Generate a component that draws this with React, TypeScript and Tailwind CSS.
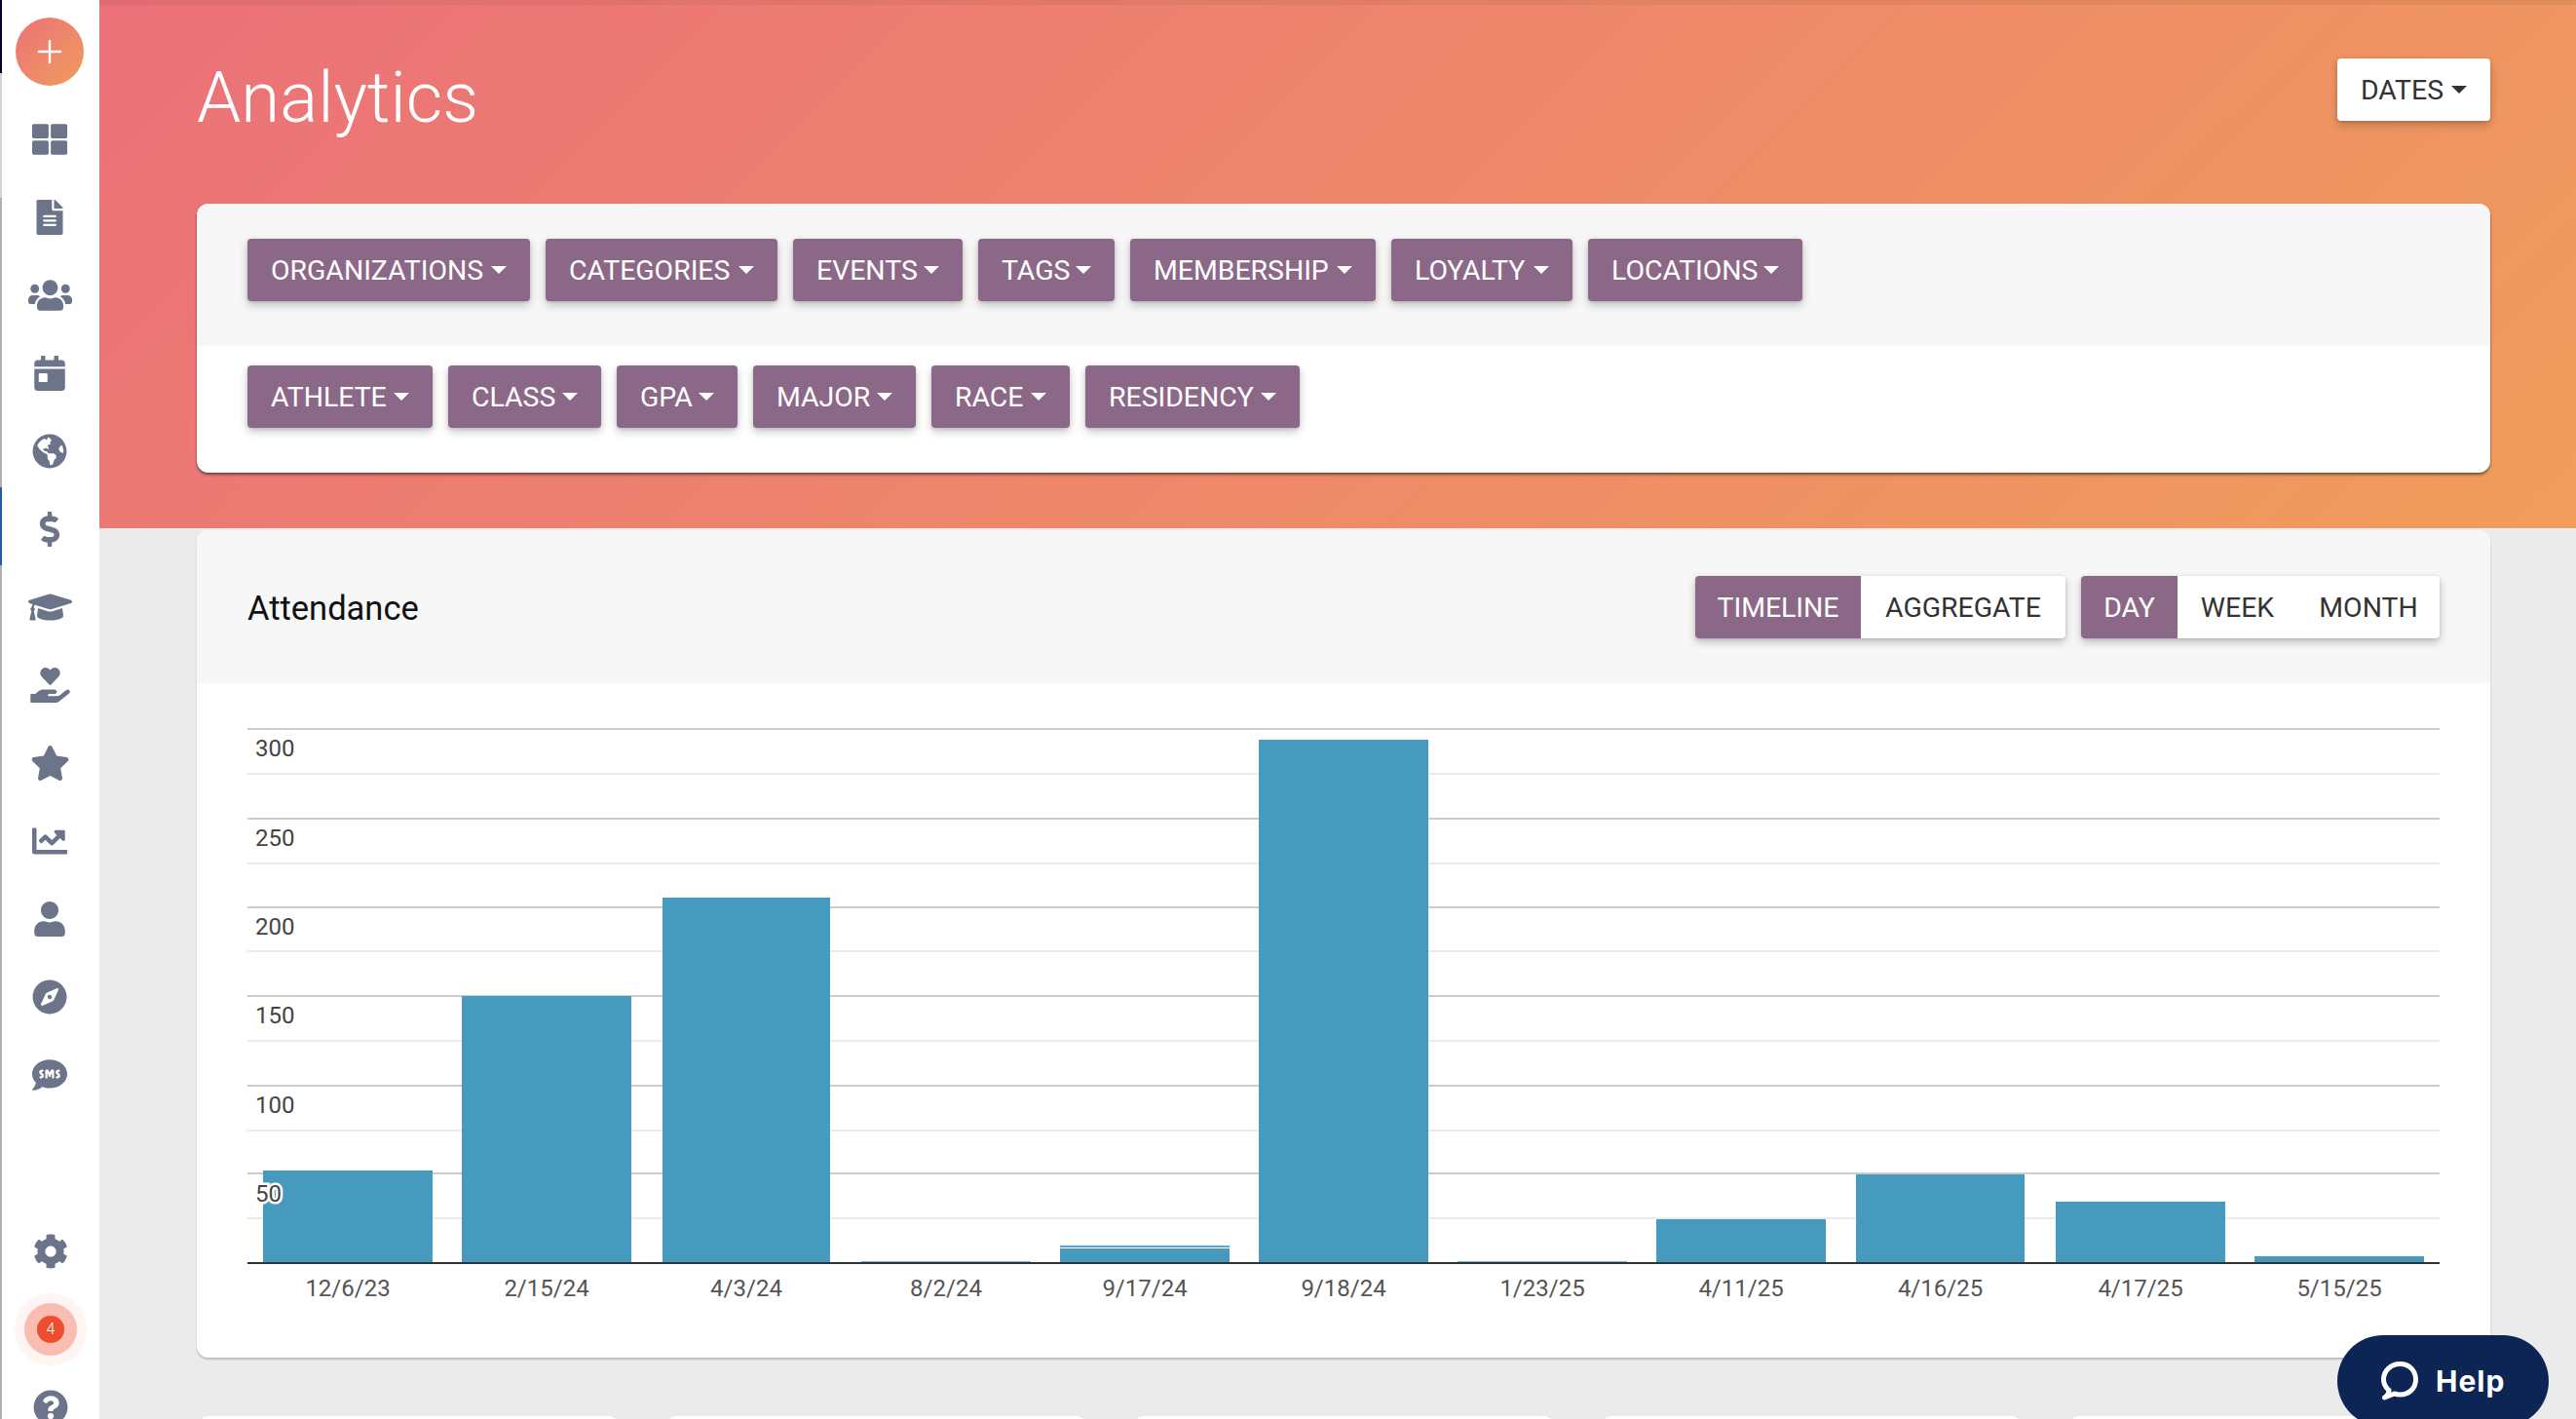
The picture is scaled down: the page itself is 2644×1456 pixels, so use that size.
import React from "react";
import {
  FaThLarge, FaFileAlt, FaUsers, FaCalendarDay, FaGlobeAmericas, FaDollarSign, FaGraduationCap,
  FaHandHoldingHeart, FaStar, FaChartLine, FaUser, FaCompass, FaSms, FaCog, FaQuestionCircle,
} from "react-icons/fa";
import { Plus } from "lucide-react";

const navIcons: { Icon: React.ComponentType<{ className?: string }>; w: string }[] = [
  { Icon: FaThLarge, w: "w-[36px]" },
  { Icon: FaFileAlt, w: "w-[36px]" },
  { Icon: FaUsers, w: "w-[45px]" },
  { Icon: FaCalendarDay, w: "w-[36px]" },
  { Icon: FaGlobeAmericas, w: "w-[36px]" },
  { Icon: FaDollarSign, w: "w-[36px]" },
  { Icon: FaGraduationCap, w: "w-[45px]" },
  { Icon: FaHandHoldingHeart, w: "w-[41px]" },
  { Icon: FaStar, w: "w-[41px]" },
  { Icon: FaChartLine, w: "w-[36px]" },
  { Icon: FaUser, w: "w-[36px]" },
  { Icon: FaCompass, w: "w-[36px]" },
  { Icon: FaSms, w: "w-[36px]" },
];

const row1 = [
  { l: "ORGANIZATIONS", w: "w-[290px]" },
  { l: "CATEGORIES", w: "w-[238px]" },
  { l: "EVENTS", w: "w-[174px]" },
  { l: "TAGS", w: "w-[140px]" },
  { l: "MEMBERSHIP", w: "w-[252px]" },
  { l: "LOYALTY", w: "w-[186px]" },
  { l: "LOCATIONS", w: "w-[220px]" },
];
const row2 = [
  { l: "ATHLETE", w: "w-[190px]" },
  { l: "CLASS", w: "w-[157px]" },
  { l: "GPA", w: "w-[124px]" },
  { l: "MAJOR", w: "w-[167px]" },
  { l: "RACE", w: "w-[142px]" },
  { l: "RESIDENCY", w: "w-[220px]" },
];

const shadowBtn = "shadow-[0_4px_10px_rgba(0,0,0,0.22),0_1px_3px_rgba(0,0,0,0.14)]";

function Caret({ className }: { className: string }) {
  return <span className={`ml-auto h-0 w-0 shrink-0 border-x-[8px] border-t-[8px] border-x-transparent ${className}`} />;
}

function FilterButton({ label, w }: { label: string; w: string }) {
  return (
    <button className={`flex h-[64px] items-center rounded-[4px] bg-[#8c6888] px-[24px] text-[28.4px] text-white ${w} ${shadowBtn}`}>
      <span className="pt-[3px]">{label}</span>
      <Caret className="border-t-white" />
    </button>
  );
}

function Toggle({ items, active }: { items: { t: string; w: string }[]; active: string }) {
  return (
    <div className={`flex h-[64px] overflow-hidden rounded-[4px] bg-white text-[28.4px] ${shadowBtn}`}>
      {items.map(({ t, w }) => (
        <span key={t} className={t === active ? `flex items-center justify-center bg-[#8c6888] pt-[3px] text-white ${w}` : `flex items-center justify-center pt-[3px] text-[#333333] ${w}`}>
          {t}
        </span>
      ))}
    </div>
  );
}

const bars: { x: number; w: number; top: number; label: string }[] = [
  { x: 270, w: 174, top: 1201, label: "12/6/23" },
  { x: 474, w: 174, top: 1022, label: "2/15/24" },
  { x: 680, w: 172, top: 921, label: "4/3/24" },
  { x: 884, w: 174, top: 1294, label: "8/2/24" },
  { x: 1088, w: 174, top: 1281, label: "9/17/24" },
  { x: 1292, w: 174, top: 759, label: "9/18/24" },
  { x: 1496, w: 174, top: 1294, label: "1/23/25" },
  { x: 1700, w: 174, top: 1251, label: "4/11/25" },
  { x: 1905, w: 173, top: 1205, label: "4/16/25" },
  { x: 2110, w: 174, top: 1233, label: "4/17/25" },
  { x: 2314, w: 174, top: 1289, label: "5/15/25" },
];

const major = [747, 839, 930, 1021, 1113, 1203];
const minor = [793, 885, 975, 1067, 1159, 1249];
const yLabels = [
  { t: "300", y: 776 },
  { t: "250", y: 868 },
  { t: "200", y: 959 },
  { t: "150", y: 1050 },
  { t: "100", y: 1142 },
  { t: "50", y: 1233 },
];

function Chart() {
  return (
    <svg viewBox="202 701 2354 692" className="block h-[692px] w-[2354px]">
      {minor.map((y) => <rect key={y} x={254} y={y} width={2250} height={2} fill="#ebebeb" />)}
      {major.map((y) => <rect key={y} x={254} y={y} width={2250} height={2} fill="#cccccc" />)}
      {bars.map((b) => (
        <rect key={b.label} x={b.x} y={b.top} width={b.w} height={1296 - b.top} fill={b.top === 1294 ? "#7cb9d4" : "#459abd"} />
      ))}
      <rect x={1088} y={1278} width={174} height={2} fill="#5aa7c7" />
      <rect x={254} y={1295} width={2250} height={2} fill="#333333" />
      {yLabels.map((l) => (
        <text key={l.t} x={262} y={l.y} fontSize={24} fill="#444444" stroke="#ffffff" strokeWidth={5} style={{ paintOrder: "stroke" }}>
          {l.t}
        </text>
      ))}
      {bars.map((b) => (
        <text key={b.label} x={b.x + b.w / 2} y={1330} fontSize={24} fill="#555555" textAnchor="middle">
          {b.label}
        </text>
      ))}
    </svg>
  );
}

function Sidebar() {
  return (
    <aside className="flex h-screen w-[102px] shrink-0 overflow-hidden bg-white">
      <div className="flex w-[2px] shrink-0 flex-col">
        <div className="h-[75px] bg-[#000033]" />
        <div className="h-[128px] bg-[#d4d4d4]" />
        <div className="h-[297px] bg-[#b0b0b0]" />
        <div className="h-[80px] bg-[#2456ad]" />
        <div className="flex-1 bg-[#b0b0b0]" />
      </div>
      <div className="flex w-[98px] shrink-0 flex-col items-center">
        <div className="mb-[15px] mt-[18px] flex h-[70px] w-[70px] shrink-0 items-center justify-center rounded-full bg-[linear-gradient(135deg,#eb7179,#f09d5c)] text-white">
          <Plus size={38} strokeWidth={1.5} />
        </div>
        {navIcons.map(({ Icon, w }, i) => (
          <div key={i} className="flex h-[80px] w-full shrink-0 items-center justify-center text-[#6b7489]">
            <Icon className={`h-[36px] ${w}`} />
          </div>
        ))}
        <div className="mt-[101px] flex h-[80px] w-full shrink-0 items-center justify-center pl-[2px] text-[#6b7489]">
          <FaCog size={36} />
        </div>
        <div className="flex h-[80px] w-full shrink-0 items-center justify-center pl-[2px]">
          <div className="flex h-[74px] w-[74px] items-center justify-center rounded-full bg-[#fff5f3]">
            <div className="flex h-[54px] w-[54px] items-center justify-center rounded-full bg-[#fbbcb2]">
              <div className="flex h-[28px] w-[28px] items-center justify-center rounded-full bg-[#ee4d30] text-[16px] font-light text-white">4</div>
            </div>
          </div>
        </div>
        <div className="flex h-[80px] w-full shrink-0 items-center justify-center pl-[2px] text-[#6b7489]">
          <FaQuestionCircle size={36} />
        </div>
      </div>
    </aside>
  );
}

export default function App() {
  return (
    <div className="relative flex h-screen w-screen overflow-hidden bg-[#ebebeb] [font-family:Roboto,sans-serif]">
      <Sidebar />
      <main className="h-screen min-w-0 flex-1 overflow-hidden">
        <header className="h-[542px] bg-[linear-gradient(135deg,#eb7179,#f09d5c)]">
          <div className="h-[5px] bg-black/5" />
          <div className="pl-[100px] pr-[88px]">
            <div className="flex h-[204px] items-start justify-between">
              <h1 className="mt-[46px] text-[72.6px] font-light leading-[100px] text-white">Analytics</h1>
              <button className={`mt-[55px] flex h-[64px] w-[157px] items-center rounded-[4px] bg-white px-[24px] text-[28.4px] text-[#333333] ${shadowBtn}`}>
                <span className="pt-[3px]">DATES</span>
                <Caret className="border-t-[#333333]" />
              </button>
            </div>
            <section className="overflow-hidden rounded-[12px] bg-white shadow-[0_2px_3px_rgba(0,0,0,0.5)]">
              <div className="flex h-[146px] gap-4 bg-[#f7f7f7] pl-[52px] pt-[36px]">
                {row1.map((b) => <FilterButton key={b.l} label={b.l} w={b.w} />)}
              </div>
              <div className="flex h-[130px] gap-4 pl-[52px] pt-[20px]">
                {row2.map((b) => <FilterButton key={b.l} label={b.l} w={b.w} />)}
              </div>
            </section>
          </div>
        </header>
        <div className="pl-[100px] pr-[88px] pt-[2px]">
          <section className="overflow-hidden rounded-[12px] bg-white shadow-[0_2px_2px_rgba(0,0,0,0.2)]">
            <div className="flex h-[157px] items-center justify-between bg-[#f7f7f7] pl-[52px] pr-[52px]">
              <h2 className="pt-[5px] text-[34.5px] font-normal text-[#111111]">Attendance</h2>
              <div className="flex gap-4">
                <Toggle items={[{ t: "TIMELINE", w: "w-[170px]" }, { t: "AGGREGATE", w: "w-[210px]" }]} active="TIMELINE" />
                <Toggle items={[{ t: "DAY", w: "w-[99px]" }, { t: "WEEK", w: "w-[123px]" }, { t: "MONTH", w: "w-[146px]" }]} active="DAY" />
              </div>
            </div>
            <Chart />
          </section>
          <div className="mt-[60px] grid grid-cols-5 gap-[46px]">
            {[0, 1, 2, 3, 4].map((i) => <div key={i} className="h-[100px] rounded-[12px] bg-white" />)}
          </div>
        </div>
      </main>
      <button className="absolute left-[2399px] top-[1370px] flex h-[94px] w-[217px] items-center gap-[18px] rounded-full bg-[#0d2554] pl-[45px] text-[30px] font-bold tracking-[1px] text-white [font-family:Inter,sans-serif]">
        <svg viewBox="0 0 38 40" className="h-[40px] w-[38px]" fill="none" stroke="#ffffff" strokeWidth={5} strokeLinejoin="round" strokeLinecap="round">
          <path d="M8 29.5C4.5 26.5 2.5 23 2.5 18.5 2.5 9.5 10 2.5 19.5 2.5S35.5 9.5 35.5 18.5 28.5 34 19.5 34C17.5 34 15.5 33.6 13.5 33L3.5 37C6.5 35 8 32.5 8 29.5Z" />
        </svg>
        Help
      </button>
    </div>
  );
}
